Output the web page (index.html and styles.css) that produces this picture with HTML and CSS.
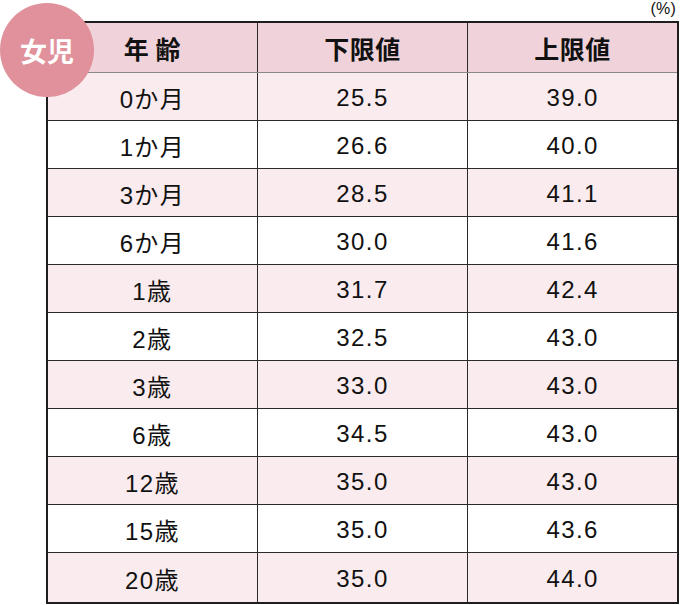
FILE: index.html
```html
<!DOCTYPE html>
<html lang="ja">
<head>
<meta charset="utf-8">
<link rel="stylesheet" href="styles.css">
</head>
<body>
<div class="page">
  <div class="unit">(%)</div>
  <div class="badge">女児</div>
  <table class="chart">
    <colgroup><col class="c"><col class="c"><col class="c"></colgroup>
    <thead>
      <tr class="head"><th>年 齢</th><th>下限値</th><th>上限値</th></tr>
    </thead>
    <tbody>
      <tr class="pink"><td>0か月</td><td>25.5</td><td>39.0</td></tr>
      <tr><td>1か月</td><td>26.6</td><td>40.0</td></tr>
      <tr class="pink"><td>3か月</td><td>28.5</td><td>41.1</td></tr>
      <tr><td>6か月</td><td>30.0</td><td>41.6</td></tr>
      <tr class="pink"><td>1歳</td><td>31.7</td><td>42.4</td></tr>
      <tr><td>2歳</td><td>32.5</td><td>43.0</td></tr>
      <tr class="pink"><td>3歳</td><td>33.0</td><td>43.0</td></tr>
      <tr><td>6歳</td><td>34.5</td><td>43.0</td></tr>
      <tr class="pink"><td>12歳</td><td>35.0</td><td>43.0</td></tr>
      <tr><td>15歳</td><td>35.0</td><td>43.6</td></tr>
      <tr class="pink last"><td>20歳</td><td>35.0</td><td>44.0</td></tr>
    </tbody>
  </table>
</div>
</body>
</html>
```
FILE: styles.css
```css
html, body {
  margin: 0;
  padding: 0;
  background: #fff;
}
body {
  font-family: "Liberation Sans", "Noto Sans CJK JP", sans-serif;
  color: #111;
}
.page {
  position: relative;
  width: 680px;
  height: 605px;
  padding: 21px 0 0 46px;
  box-sizing: border-box;
}
.unit {
  position: absolute;
  top: 0;
  right: 4px;
  font-size: 16px;
  line-height: 18px;
  letter-spacing: 0.2px;
}
.badge {
  position: absolute;
  left: 0;
  top: 3px;
  width: 94px;
  height: 94px;
  border-radius: 50%;
  background: #e0919b;
  color: #fff;
  font-family: "Noto Sans CJK JP", sans-serif;
  font-weight: 700;
  font-size: 27px;
  display: flex;
  align-items: center;
  justify-content: center;
  z-index: 2;
}
.chart {
  width: 633px;
  border-collapse: collapse;
  border: 2px solid #1e1e1e;
  table-layout: fixed;
}
.chart .c {
  width: 33.333%;
}
.chart th, .chart td {
  border: 1px solid #2a2a2a;
  text-align: center;
  padding: 0;
}
.chart tr.head {
  height: 50px;
}
.chart tbody tr {
  height: 48px;
}
.chart tbody tr.last {
  height: 51px;
}
.chart th {
  background: #f0d3da;
  font-family: "Noto Sans CJK JP", sans-serif;
  font-weight: 700;
  font-size: 25px;
  letter-spacing: 0.5px;
  border-bottom-color: #888;
  padding-top: 1px;
}
.chart td {
  font-size: 24px;
  letter-spacing: 1.4px;
  padding-top: 3px;
}
.chart tr.pink td {
  background: #f9ebee;
}
```
